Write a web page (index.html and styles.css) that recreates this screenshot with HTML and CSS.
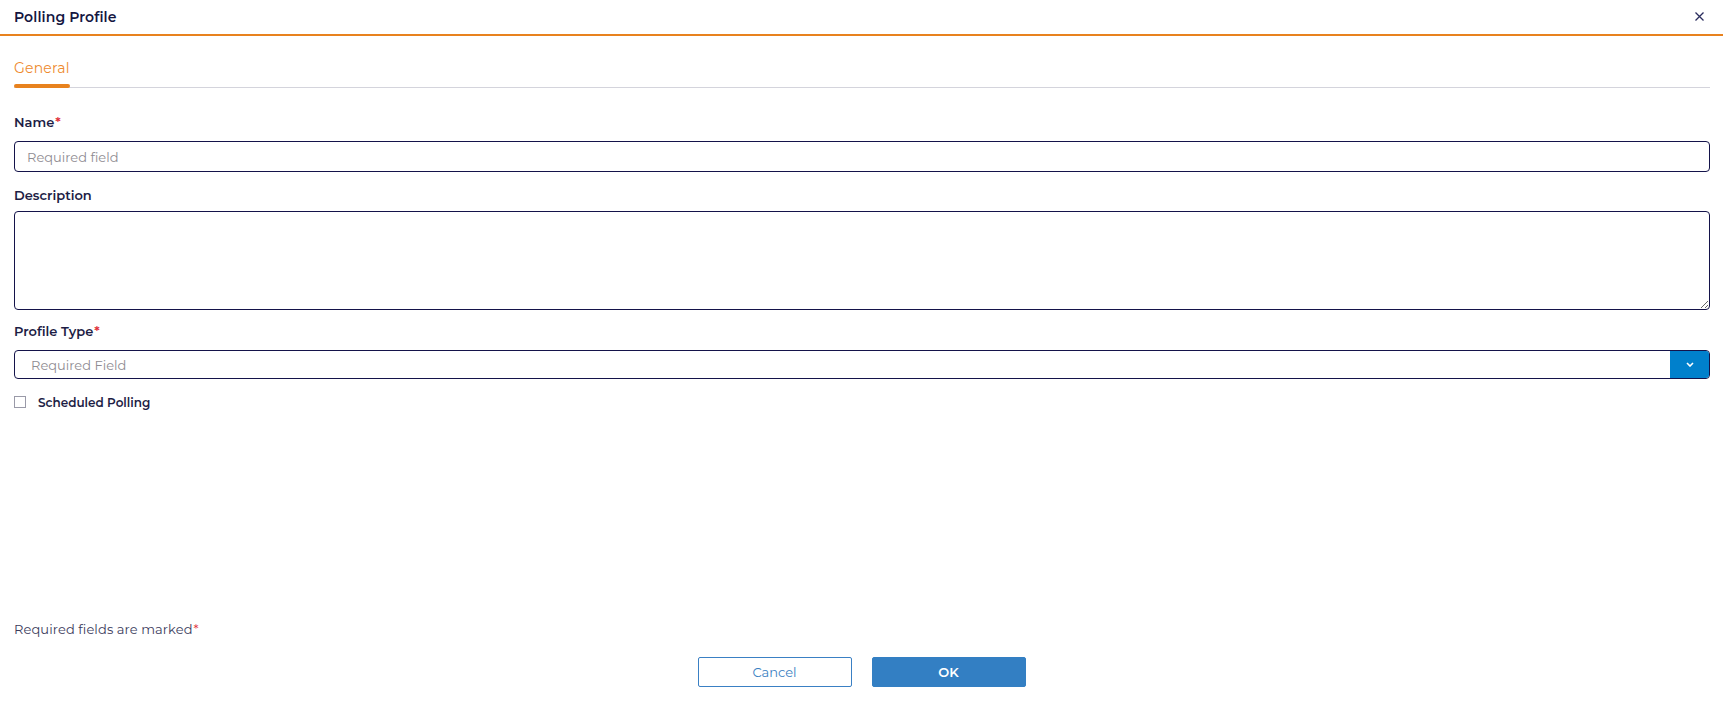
FILE: index.html
```html
<!DOCTYPE html>
<html lang="en">
<head>
<meta charset="utf-8">
<title>Polling Profile</title>
<link rel="stylesheet" href="styles.css">
</head>
<body>
<div class="dialog">
  <header class="dialog-header">
    <h1 class="dialog-title">Polling Profile</h1>
    <button class="close-btn" aria-label="Close">
      <svg width="9" height="9" viewBox="0 0 9 9"><path d="M0.5 0.5L8.5 8.5M8.5 0.5L0.5 8.5" stroke="#2b2d5e" stroke-width="1.3" fill="none"/></svg>
    </button>
  </header>
  <main class="dialog-body">
    <nav class="tabs">
      <span class="tab active">General</span>
    </nav>
    <form class="form">
      <div class="field field-name">
        <label class="label">Name<span class="req">*</span></label>
        <input class="input" type="text" placeholder="Required field">
      </div>
      <div class="field field-desc">
        <label class="label">Description</label>
        <textarea class="textarea"></textarea>
      </div>
      <div class="field field-type">
        <label class="label">Profile Type<span class="req">*</span></label>
        <div class="select">
          <span class="select-text">Required Field</span>
          <span class="select-btn">
            <svg width="8" height="5" viewBox="0 0 8 5"><path d="M1 1L4 4L7 1" stroke="#fff" stroke-width="1.6" fill="none"/></svg>
          </span>
        </div>
      </div>
      <div class="check-row">
        <span class="checkbox"></span>
        <span class="check-label">Scheduled Polling</span>
      </div>
    </form>
  </main>
  <footer class="dialog-footer">
    <p class="req-note">Required fields are marked<span class="req">*</span></p>
    <div class="actions">
      <button class="btn btn-cancel">Cancel</button>
      <button class="btn btn-ok">OK</button>
    </div>
  </footer>
</div>
</body>
</html>
```

FILE: styles.css
```css
* { box-sizing: border-box; }
html, body { margin: 0; padding: 0; background: #fff; }
body {
  font-family: "Montserrat", "Open Sans", "Noto Sans", sans-serif;
  color: #1d1d45;
}
.dialog {
  height: 100vh;
  display: flex;
  flex-direction: column;
}
.dialog-header {
  height: 36px;
  flex: none;
  display: flex;
  align-items: center;
  justify-content: space-between;
  padding: 0 19px 0 14px;
  border-bottom: 2px solid #e8821e;
}
.dialog-title {
  margin: 0;
  font-size: 14px;
  font-weight: 600;
  color: #14163f;
  line-height: 20px;
  letter-spacing: 0.1px;
}
.close-btn {
  border: 0;
  background: none;
  padding: 0;
  width: 9px;
  height: 9px;
  display: flex;
  margin-top: -1px;
  cursor: pointer;
}
.dialog-body {
  flex: 1;
  padding: 0 13px 0 14px;
}
.tabs {
  margin-top: 22px;
  border-bottom: 1px solid #d4d4dc;
  display: flex;
}
.tab {
  position: relative;
  font-size: 14px;
  line-height: 20px;
  padding-bottom: 9px;
  color: #ee8a2e;
  letter-spacing: 0.2px;
}
.tab.active::after {
  content: "";
  position: absolute;
  left: 0;
  right: 0;
  bottom: -1px;
  height: 4px;
  border-radius: 2px;
  background: #e8821e;
}
.form { display: flex; flex-direction: column; }
.label {
  display: block;
  font-size: 13px;
  font-weight: 600;
  line-height: 16px;
  color: #1d1d45;
}
.req { color: #e0303a; margin-left: 1px; }
.field-name { margin-top: 26px; }
.field-name .label { margin-bottom: 11px; }
.field-desc { margin-top: 15px; }
.field-desc .label { margin-bottom: 8px; }
.field-type { margin-top: 13px; }
.field-type .label { margin-bottom: 11px; }
.input, .textarea {
  display: block;
  width: 100%;
  border: 1px solid #14134a;
  border-radius: 4px;
  font-family: inherit;
  font-size: 13px;
  color: #1d1d45;
  outline: none;
}
.input {
  height: 31px;
  padding: 0 12px;
}
.input::placeholder { color: #8f8c92; }
.textarea {
  height: 99px;
  padding: 6px 12px;
  resize: vertical;
}
.select {
  height: 29px;
  display: flex;
  border: 1px solid #14134a;
  border-radius: 4px;
  overflow: hidden;
}
.select-text {
  flex: 1;
  display: flex;
  align-items: center;
  padding-left: 16px;
  font-size: 13px;
  color: #8f8c92;
}
.select-btn {
  width: 39px;
  background: #0080cc;
  display: flex;
  align-items: center;
  justify-content: center;
}
.check-row {
  margin-top: 15px;
  display: flex;
  align-items: center;
  height: 16px;
}
.checkbox {
  width: 12px;
  height: 12px;
  border: 1px solid #9a9aa8;
  margin-right: 12px;
}
.check-label {
  font-size: 12px;
  font-weight: 600;
  color: #1d1d45;
}
.dialog-footer {
  flex: none;
  padding: 0 14px 26px;
}
.req-note {
  margin: 0 0 20px;
  font-size: 13px;
  line-height: 16px;
  color: #3b3b5c;
  letter-spacing: 0.1px;
}
.actions {
  display: flex;
  justify-content: center;
  gap: 20px;
}
.btn {
  width: 154px;
  height: 30px;
  border-radius: 2px;
  font-family: inherit;
  font-size: 13px;
  cursor: pointer;
}
.btn-cancel {
  background: #fff;
  border: 1px solid #3a80c4;
  color: #3a7fc2;
}
.btn-ok {
  background: #337fc3;
  border: 1px solid #337fc3;
  color: #fff;
  font-weight: 600;
}
```
